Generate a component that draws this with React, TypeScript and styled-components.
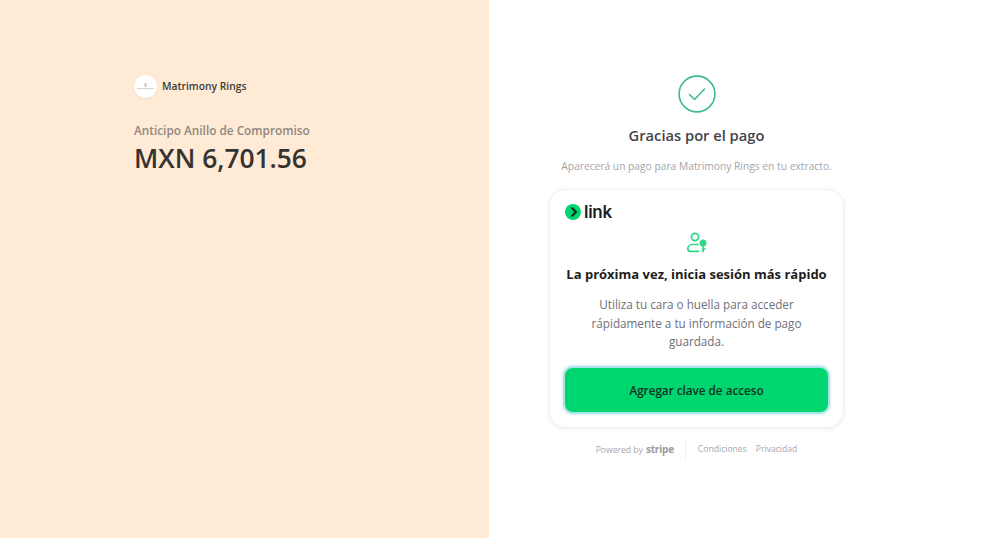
import styled, { createGlobalStyle } from "styled-components";

const GlobalStyle = createGlobalStyle`
  html, body {
    margin: 0;
    padding: 0;
    background: #ffffff;
    font-family: "Open Sans", "Noto Sans", sans-serif;
    overflow: hidden;
  }
  * { box-sizing: border-box; }
`;

const Page = styled.div`
  display: grid;
  grid-template-columns: 489px 1fr;
  width: 1000px;
  height: 538px;
`;

const SummaryPanel = styled.section`
  background: #ffead5;
  padding: 74px 0 0 134px;
`;

const Merchant = styled.div`
  display: flex;
  align-items: center;
  gap: 5px;
  height: 24px;
  margin-bottom: 24px;
`;

const MerchantLogo = styled.div`
  width: 23px;
  height: 23px;
  border-radius: 50%;
  background: #ffffff;
  box-shadow: 0 1px 2px rgba(0, 0, 0, 0.08);
  display: flex;
  align-items: center;
  justify-content: center;
`;

const MerchantName = styled.span`
  font-size: 10.3px;
  font-weight: 600;
  color: #3d3a37;
`;

const ProductName = styled.div`
  font-size: 11.8px;
  font-weight: 600;
  line-height: 16px;
  color: #8f8881;
`;

const Amount = styled.div`
  font-size: 26.35px;
  font-weight: 600;
  line-height: 36px;
  margin-top: 2px;
  color: #35322f;
`;

const ConfirmPanel = styled.section`
  display: flex;
  flex-direction: column;
  align-items: center;
  padding-top: 75px;
  width: 415px;
`;

const Title = styled.h1`
  margin: 12px 0 0;
  font-size: 14.7px;
  font-weight: 600;
  line-height: 20px;
  color: #44444a;
`;

const Subtitle = styled.p`
  margin: 14px 0 0;
  font-size: 10.25px;
  line-height: 14px;
  color: #a3a5aa;
  white-space: nowrap;
`;

const LinkCard = styled.div`
  width: 295px;
  height: 239px;
  margin-top: 16px;
  padding: 13px 15px 15px;
  border-radius: 16px;
  background: #ffffff;
  border: 1px solid #f0f0f2;
  box-shadow: 0 1px 4px rgba(0, 0, 0, 0.07);
  display: flex;
  flex-direction: column;
  align-items: center;
`;

const LinkBrand = styled.div`
  align-self: flex-start;
  display: flex;
  align-items: center;
  gap: 3px;
  height: 18px;
`;

const LinkWord = styled.span`
  font-family: "Inter", sans-serif;
  font-size: 17px;
  font-weight: 600;
  letter-spacing: -0.3px;
  color: #1d1d1f;
`;

const CardIcon = styled.div`
  height: 22px;
  margin-top: 11px;
  display: flex;
`;

const CardTitle = styled.h2`
  margin: 10px 0 0;
  font-size: 13px;
  font-weight: 700;
  line-height: 20px;
  color: #1d1d20;
  white-space: nowrap;
`;

const CardText = styled.p`
  margin: 11px 0 0;
  width: 230px;
  text-align: center;
  font-size: 11.7px;
  line-height: 18.5px;
  color: #6e7078;
`;

const PasskeyButton = styled.button`
  width: 263px;
  height: 44px;
  margin-top: 17px;
  flex: none;
  border: none;
  border-radius: 8px;
  background: #00d66f;
  box-shadow: 0 0 0 2px #a9e3e6, 0 0 3px 3px #d5f1f2;
  font: 600 11.7px "Open Sans", sans-serif;
  color: #11331f;
`;

const Footer = styled.footer`
  display: flex;
  align-items: center;
  height: 20px;
  margin-top: 11px;
  font-size: 8.6px;
  color: #a6a8ad;
`;

const Powered = styled.span`
  display: flex;
  align-items: baseline;
  gap: 3px;
  padding-right: 11px;
  border-right: 1px solid #eeeeef;
  line-height: 18px;
`;

const StripeWord = styled.span`
  font-size: 10px;
  font-weight: 700;
  letter-spacing: -0.2px;
  color: #9a9ca1;
`;

const FooterLink = styled.a`
  margin-left: ${({ $gap }: { $gap: number }) => $gap}px;
`;

export default function App() {
  return (
    <>
      <GlobalStyle />
      <Page>
        <SummaryPanel>
          <Merchant>
            <MerchantLogo>
              <svg width="17" height="7" viewBox="0 0 17 7">
                <rect x="7.5" y="0" width="2" height="4" fill="#c9c6c2" />
                <rect x="0" y="5" width="17" height="1" fill="#d6d3cf" />
              </svg>
            </MerchantLogo>
            <MerchantName>Matrimony Rings</MerchantName>
          </Merchant>
          <ProductName>Anticipo Anillo de Compromiso</ProductName>
          <Amount>MXN 6,701.56</Amount>
        </SummaryPanel>
        <ConfirmPanel>
          <svg width="38" height="38" viewBox="0 0 38 38" fill="none">
            <circle cx="19" cy="19" r="17.9" stroke="#3fb996" strokeWidth="1.6" />
            <path d="M11.5 19.5l5 5 10-10.5" stroke="#3fb996" strokeWidth="1.6" strokeLinecap="round" strokeLinejoin="round" />
          </svg>
          <Title>Gracias por el pago</Title>
          <Subtitle>Aparecerá un pago para Matrimony Rings en tu extracto.</Subtitle>
          <LinkCard>
            <LinkBrand>
              <svg width="16" height="16" viewBox="0 0 16 16">
                <circle cx="8" cy="8" r="8" fill="#00d66f" />
                <path d="M5.2 3.6h3L12.4 8l-4.2 4.4h-3L9.2 8z" fill="#11331f" />
              </svg>
              <LinkWord>link</LinkWord>
            </LinkBrand>
            <CardIcon>
              <svg width="22" height="22" viewBox="0 0 22 22" fill="none" stroke="#2fd684" strokeWidth="1.7" strokeLinecap="round" strokeLinejoin="round">
                <circle cx="9" cy="5" r="3.6" />
                <path d="M12 12.5H6.5C3.8 12.5 1.8 14.5 1.8 16.8c0 1.5 1 2.5 2.4 2.5h8.3" />
                <circle cx="17" cy="11" r="2.6" fill="#2fd684" />
                <path d="M17 13v6.5M17 17h1.8" />
              </svg>
            </CardIcon>
            <CardTitle>La próxima vez, inicia sesión más rápido</CardTitle>
            <CardText>Utiliza tu cara o huella para acceder rápidamente a tu información de pago guardada.</CardText>
            <PasskeyButton>Agregar clave de acceso</PasskeyButton>
          </LinkCard>
          <Footer>
            <Powered>
              Powered by <StripeWord>stripe</StripeWord>
            </Powered>
            <FooterLink $gap={12}>Condiciones</FooterLink>
            <FooterLink $gap={9}>Privacidad</FooterLink>
          </Footer>
        </ConfirmPanel>
      </Page>
    </>
  );
}
